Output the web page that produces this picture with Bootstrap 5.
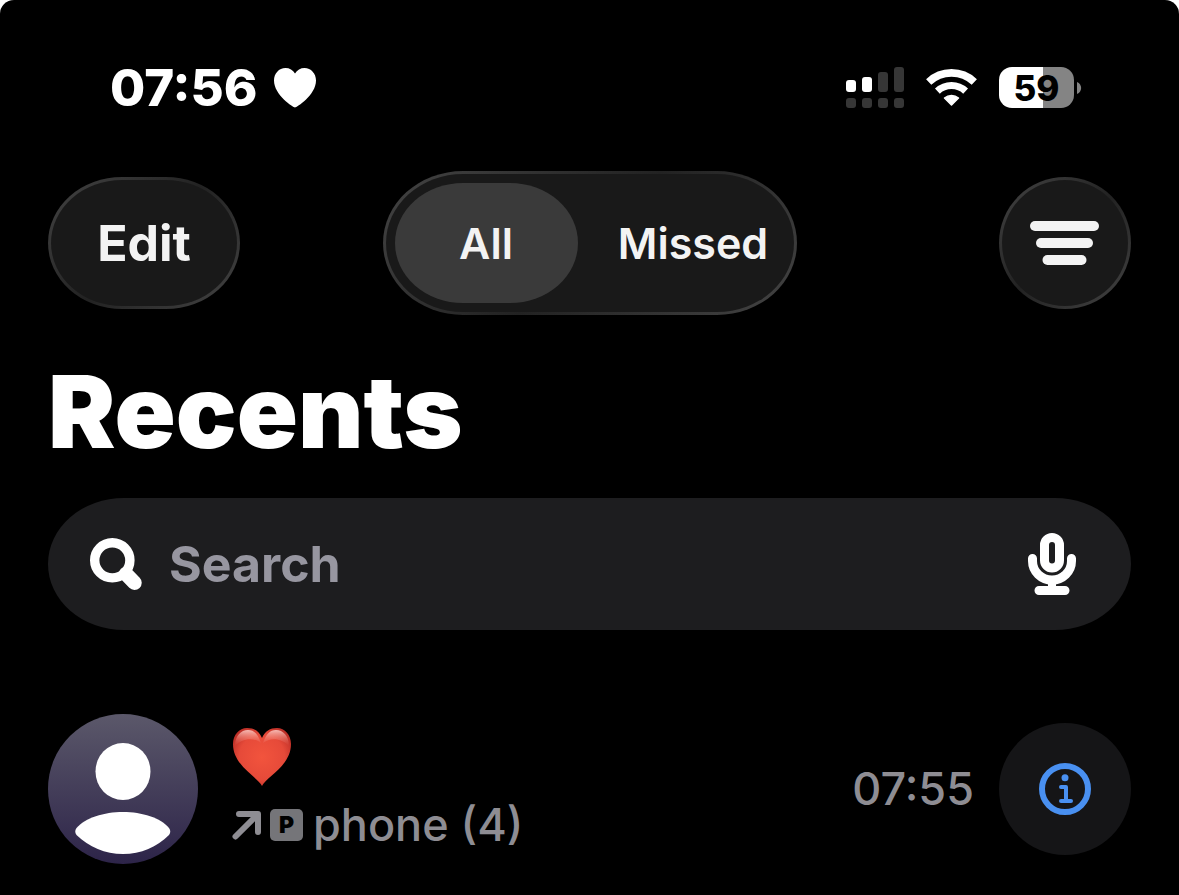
<!DOCTYPE html>
<html lang="en">
<head>
<meta charset="utf-8">
<meta name="viewport" content="width=device-width, initial-scale=1">
<title>Recents</title>
<link href="https://cdn.jsdelivr.net/npm/bootstrap@5.3.0/dist/css/bootstrap.min.css" rel="stylesheet">
<style>
  body { background: #fff; font-family: Inter, sans-serif; color: #fff; }
  svg { display: block; flex: none; }
  .phone-app { background: #000; border-radius: 14px 14px 0 0; min-height: 100vh; padding: 64px 48px 31px; }

  /* Status bar */
  .status-bar { height: 47px; padding: 0 49px 0 62px; margin-bottom: 60px; }
  .status-time { font-size: 51px; font-weight: 800; line-height: 50px; }
  .battery { width: 75px; height: 41px; border-radius: 13px; background: linear-gradient(90deg, #fff 59%, #848484 59%);
    color: #000; font-size: 35px; font-weight: 800; line-height: 42px; text-align: center; }

  /* Toolbar */
  .toolbar { display: grid; grid-template-columns: 1fr auto 1fr; align-items: center; margin-bottom: 46px; }
  .glass { border: 3px solid transparent; color: #f3f3f3;
    background: linear-gradient(#191919, #191919) padding-box, linear-gradient(135deg, #444, #222 50%, #444) border-box; }
  .edit-btn { width: 192px; height: 132px; border-radius: 74px / 66px; font-size: 50px; font-weight: 700; line-height: 60px; }
  .filter-btn { width: 132px; height: 132px; border-radius: 50%; }
  .segments { height: 144px; padding: 9px; gap: 24px; border-radius: 80px / 72px; }
  .segment { width: 183px; height: 120px; border-radius: 68px / 60px; color: #f3f3f3; font-size: 43px; font-weight: 600; line-height: 120px; padding: 0; border: 0; }
  .btn-check:checked + .segment { background: #3a3a3a; color: #f3f3f3; }

  .page-title { font-size: 101px; font-weight: 900; line-height: 100px; margin-bottom: 37px; }

  /* Search */
  .search-field { height: 132px; background: #1d1d1f; border-radius: 76px / 66px; padding: 0 55px 0 42px; gap: 27px; margin-bottom: 84px; }
  .search-input, .search-input:focus { background: transparent; border: 0; box-shadow: none; padding: 0; color: #fff; font-size: 50px; font-weight: 700; line-height: 60px; }
  .search-input::placeholder { color: #9796a0; opacity: 1; }

  /* Call row */
  .call-text { padding: 14px 0 0 34px; gap: 10px; }
  .call-detail, .call-time { color: #8e8d93; font-size: 45px; font-weight: 500; line-height: 54px; }
  .line-tag { width: 33px; height: 32px; border-radius: 5px; background: #757579; color: #000; font-size: 23px; font-weight: 900; line-height: 32px; text-align: center; margin: 0 10px 0 8px; }
  .call-time { margin-right: 25px; }
  .info-btn { width: 132px; height: 132px; border-radius: 50%; background: #151517; }
</style>
</head>
<body>
<div class="phone-app d-flex flex-column">
  <header class="status-bar d-flex align-items-center justify-content-between">
    <div class="d-flex align-items-center gap-3">
      <span class="status-time">07:56</span>
      <svg width="42" height="40" viewBox="0 0 42 40" fill="#fff" aria-hidden="true"><path d="M21 39.5C19.5 39.5 0 27 0 12.500C0 5.500 5 0 11.500 0C15.500 0 19 2 21 5.500C23 2 26.500 0 30.500 0C37 0 42 5.500 42 12.500C42 27 22.500 39.500 21 39.500Z"/></svg>
    </div>
    <div class="d-flex align-items-center">
      <svg width="58" height="41" viewBox="0 0 58 41" fill="#363636" aria-label="Signal">
        <rect y="13" width="10" height="12" rx="3" fill="#fff"/><rect x="16" y="10" width="10" height="15" rx="3" fill="#fff"/>
        <rect x="32" y="5" width="10" height="20" rx="3"/><rect x="48" width="10" height="25" rx="3"/>
        <rect y="31" width="10" height="10" rx="3"/><rect x="16" y="31" width="10" height="10" rx="3"/><rect x="32" y="31" width="10" height="10" rx="3"/><rect x="48" y="31" width="10" height="10" rx="3"/>
      </svg>
      <svg class="mx-4" width="47" height="37" viewBox="2 0 47 37" overflow="visible" fill="none" stroke="#fff" aria-label="Wi-Fi">
        <path d="M2.700 12.900A33.200 33.200 0 0 1 48.300 12.900" stroke-width="7.600"/>
        <path d="M11.400 22.100A20.500 20.500 0 0 1 39.600 22.100" stroke-width="7"/>
        <path d="M18.500 29A11 11 0 0 1 32.500 29L25.500 36Z" fill="#fff" stroke-width="1.500" stroke-linejoin="round"/>
      </svg>
      <div class="battery">59</div>
      <svg width="8" height="12" viewBox="0 0 8 12" fill="#848484" aria-hidden="true"><path d="M3 0C8.500 2 8.500 10 3 12Z"/></svg>
    </div>
  </header>

  <nav class="toolbar">
    <button type="button" class="btn glass edit-btn">Edit</button>
    <div class="segments glass d-flex" role="group" aria-label="Calls shown">
      <input type="radio" class="btn-check" name="calls" id="calls-all" checked>
      <label class="btn segment" for="calls-all">All</label>
      <input type="radio" class="btn-check" name="calls" id="calls-missed">
      <label class="btn segment" for="calls-missed">Missed</label>
    </div>
    <button type="button" class="btn glass filter-btn d-flex align-items-center justify-content-center p-0 ms-auto" aria-label="Filter">
      <svg width="70" height="44" viewBox="0 0 70 44" fill="#f3f3f3"><rect y="0" width="69" height="10" rx="5"/><rect x="6" y="17" width="57" height="10" rx="5"/><rect x="12.500" y="34" width="44" height="10" rx="5"/></svg>
    </button>
  </nav>

  <h1 class="page-title">Recents</h1>

  <form class="search-field d-flex align-items-center" role="search">
    <svg width="52" height="52" viewBox="0 0 52 52" fill="none" stroke="#fff" stroke-linecap="round" aria-hidden="true">
      <circle cx="22.300" cy="22.300" r="17.600" stroke-width="9.400"/><path d="M36 36L44.500 44.700" stroke-width="14.500"/>
    </svg>
    <input type="text" class="form-control search-input" placeholder="Search" aria-label="Search">
    <button type="button" class="btn p-0 border-0" aria-label="Dictate">
      <svg width="48" height="62" viewBox="0 0 48 62" fill="none" stroke="#fff" stroke-width="9" stroke-linecap="round">
        <rect x="16.500" y="4.500" width="15" height="30.500" rx="7.500"/><path d="M4.500 25.500V28A19.500 19 0 0 0 43.500 28V25.500M11 57.500H37"/><path d="M24 48V57" stroke-width="8"/>
      </svg>
    </button>
  </form>

  <main class="d-flex align-items-center">
    <svg width="150" height="150" viewBox="0 0 150 150" aria-hidden="true">
      <defs><linearGradient id="avatar-fill" x2="0" y2="1"><stop stop-color="#5b586a"/><stop offset="1" stop-color="#2d2449"/></linearGradient></defs>
      <circle cx="75" cy="75" r="75" fill="url(#avatar-fill)"/>
      <ellipse cx="75" cy="57.500" rx="27.500" ry="28.500" fill="#fff"/>
      <path d="M28.500 114C37 104 56 98 75 98S113 104 121 114Q123.500 117.500 121 121C109 133 93 140 75 140S41 133 28.500 121Q26 117.500 28.500 114Z" fill="#fff"/>
    </svg>
    <div class="call-text d-flex flex-column align-self-start flex-grow-1">
      <svg width="60" height="60" viewBox="0 0 60 60" role="img" aria-label="Red heart">
        <defs>
          <radialGradient id="heart-fill" cx=".5" cy=".5" r=".6"><stop stop-color="#f2543d"/><stop offset=".65" stop-color="#e64a39"/><stop offset="1" stop-color="#b92c25"/></radialGradient>
          <linearGradient id="heart-shine" x2="0" y2="1"><stop stop-color="#ffd2cc" stop-opacity=".85"/><stop offset="1" stop-color="#f07060" stop-opacity="0"/></linearGradient>
        </defs>
        <path d="M30 58C26 49 1 38 1 16C1 7 7 0 15 0C22 0 27 3 30 10C33 3 38 0 45 0C53 0 59 7 59 16C59 38 34 49 30 58Z" fill="url(#heart-fill)"/>
        <path d="M3 18C3 8 9 2 16 2C22 2 26 6 29 15C22 9 10 10 3 18ZM57 18C57 8 51 2 44 2C38 2 34 6 31 15C38 9 50 10 57 18Z" fill="url(#heart-shine)"/>
      </svg>
      <div class="call-detail d-flex align-items-center">
        <svg width="30" height="29" viewBox="0 0 30 29" fill="none" stroke="#8e8d93" stroke-width="6" stroke-linecap="round" stroke-linejoin="round" aria-label="Outgoing"><path d="M7 3H26V21M25 4L3.500 25.500"/></svg>
        <span class="line-tag">P</span>
        <span>phone (4)</span>
      </div>
    </div>
    <time class="call-time">07:55</time>
    <button type="button" class="btn info-btn d-flex align-items-center justify-content-center p-0 border-0" aria-label="Call details">
      <svg width="52" height="52" viewBox="0 0 52 52" fill="none" stroke="#4990f1" stroke-linecap="round" stroke-linejoin="round">
        <circle cx="26" cy="26" r="23" stroke-width="6"/><circle cx="26" cy="14.700" r="3.500" fill="#4990f1" stroke="none"/><path d="M22 24H27V38M22 38H32" stroke-width="4"/>
      </svg>
    </button>
  </main>
</div>
<script src="https://cdn.jsdelivr.net/npm/bootstrap@5.3.0/dist/js/bootstrap.bundle.min.js"></script>
</body>
</html>
